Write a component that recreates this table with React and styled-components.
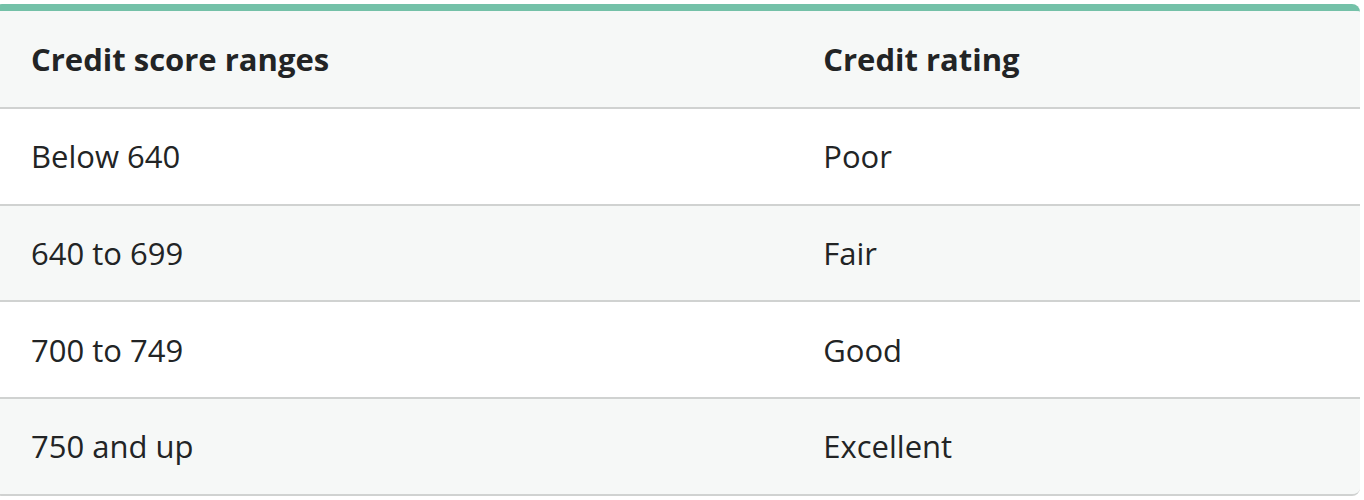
import React from 'react'
import styled, { createGlobalStyle } from 'styled-components'

const Global = createGlobalStyle`
  body {
    margin: 0;
    background: #ffffff;
    font-family: "Open Sans", "Noto Sans", Arial, sans-serif;
    overflow: hidden;
  }
`

const rows = [
  ['Below 640', 'Poor'],
  ['640 to 699', 'Fair'],
  ['700 to 749', 'Good'],
  ['750 and up', 'Excellent'],
]

export default function App() {
  return (
    <Page>
      <Global />
      <Table>
        <colgroup>
          <col style={{ width: '58%' }} />
          <col style={{ width: '42%' }} />
        </colgroup>
        <thead>
          <tr>
            <Head>Credit score ranges</Head>
            <Head>Credit rating</Head>
          </tr>
        </thead>
        <tbody>
          {rows.map((r, i) => (
            <Row key={r[0]} $shaded={i % 2 === 1}>
              <Cell>{r[0]}</Cell>
              <Cell>{r[1]}</Cell>
            </Row>
          ))}
        </tbody>
      </Table>
    </Page>
  )
}

const Page = styled.div`
  padding-top: 4px;
  width: 1366px;
  margin-left: -6px;
`

const Table = styled.table`
  width: 100%;
  border-collapse: separate;
  border-spacing: 0;
  table-layout: fixed;
  border-top: 7px solid #74c1a8;
  border-bottom: 2px solid #d0d2d1;
  border-radius: 8px;
  overflow: hidden;
  background: #f6f8f7;
  color: #222425;
`

const Head = styled.th`
  text-align: left;
  font-weight: 700;
  font-size: 31px;
  height: 96px;
  padding: 0 37px;
  background: #f6f8f7;
  border-bottom: 2px solid #d0d2d1;
`

const Row = styled.tr`
  background: ${p => (p.$shaded ? '#f6f8f7' : '#ffffff')};
  &:not(:last-child) td {
    border-bottom: 2px solid #d0d2d1;
  }
`

const Cell = styled.td`
  font-size: 31px;
  font-weight: 400;
  height: 94.7px;
  padding: 0 37px;
`
